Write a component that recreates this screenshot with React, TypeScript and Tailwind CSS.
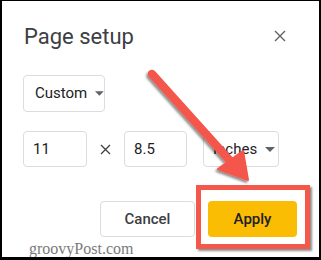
import { type ReactNode } from 'react'

const FONT = { fontFamily: 'Roboto, "Noto Sans", Arial, sans-serif' }

function Caret() {
  return (
    <svg width="10" height="5" viewBox="0 0 10 5" className="ml-2">
      <path d="M0 0 L10 0 L5 5 Z" fill="#5f6368" />
    </svg>
  )
}

function Box({ w, children }: { w: string; children: ReactNode }) {
  return (
    <div
      className={
        'flex h-[36px] items-center rounded-[4px] border border-[#dadce0] pl-[9px] text-[15px] text-[#202124] ' +
        w
      }
    >
      {children}
    </div>
  )
}

export default function App() {
  return (
    <div
      className="relative h-[260px] w-[321px] overflow-hidden border-t border-r-2 border-b-[3px] border-l-2 border-black bg-white"
      style={FONT}
    >
      <div className="flex items-start justify-between pl-[22px] pr-[33px] pt-[21px]">
        <h1 className="text-[22px] leading-[30px] text-[#3c4043]">Page setup</h1>
        <svg width="12" height="12" viewBox="0 0 12 12" className="mt-[8px]">
          <path d="M1 1 L11 11 M11 1 L1 11" stroke="#5f6368" strokeWidth="1.4" />
        </svg>
      </div>

      <div className="mt-[23px] pl-[21px]">
        <div className="flex h-[37px] w-[82px] items-center rounded-[4px] border border-[#dadce0] pl-[11px] text-[15px] text-[#202124]">
          Custom
          <Caret />
        </div>
      </div>

      <div className="mt-[19px] flex items-center pl-[21px]">
        <Box w="w-[64px]">11</Box>
        <svg width="11" height="11" viewBox="0 0 11 11" className="mx-[13px]">
          <path d="M1 1 L10 10 M10 1 L1 10" stroke="#3c4043" strokeWidth="1.3" />
        </svg>
        <Box w="w-[63px]">8.5</Box>
        <div className="ml-[16px] flex h-[36px] w-[76px] items-center rounded-[4px] border border-[#dadce0] pl-[9px] text-[15px] text-[#202124]">
          Inches
          <Caret />
        </div>
      </div>

      <div className="mt-[34px] flex gap-[13px] pl-[98px]">
        <button className="h-[36px] w-[95px] rounded-[4px] border border-[#dadce0] bg-white text-[15px] font-medium text-[#3c4043]">
          Cancel
        </button>
        <button className="h-[36px] w-[89px] rounded-[4px] bg-[#fbbc04] text-[15px] font-medium text-[#202124]">
          Apply
        </button>
      </div>

      <div
        className="absolute left-[27px] top-[236px] text-[16px] text-[#7a7a7a]"
        style={{ fontFamily: '"Liberation Serif", "DejaVu Serif", serif' }}
      >
        groovyPost.com
      </div>

      <div className="absolute left-[194px] top-[184px] h-[64px] w-[114px] border-[5px] border-[#f4584b] shadow-[2px_2px_2px_rgba(0,0,0,0.45)]" />

      <svg
        className="pointer-events-none absolute left-0 top-0"
        width="321"
        height="260"
        viewBox="0 0 321 260"
      >
        <defs>
          <filter id="sh" x="-20%" y="-20%" width="140%" height="140%">
            <feDropShadow dx="-1.5" dy="2" stdDeviation="1.2" floodColor="#000" floodOpacity="0.45" />
          </filter>
        </defs>
        <g filter="url(#sh)">
          <path d="M150 73 L231 163" stroke="#f4574b" strokeWidth="8.5" strokeLinecap="round" />
          <path d="M246 179 L216 168 L241 150 Z" fill="#f4574b" stroke="#f4574b" strokeWidth="2" strokeLinejoin="round" />
        </g>
      </svg>
    </div>
  )
}
